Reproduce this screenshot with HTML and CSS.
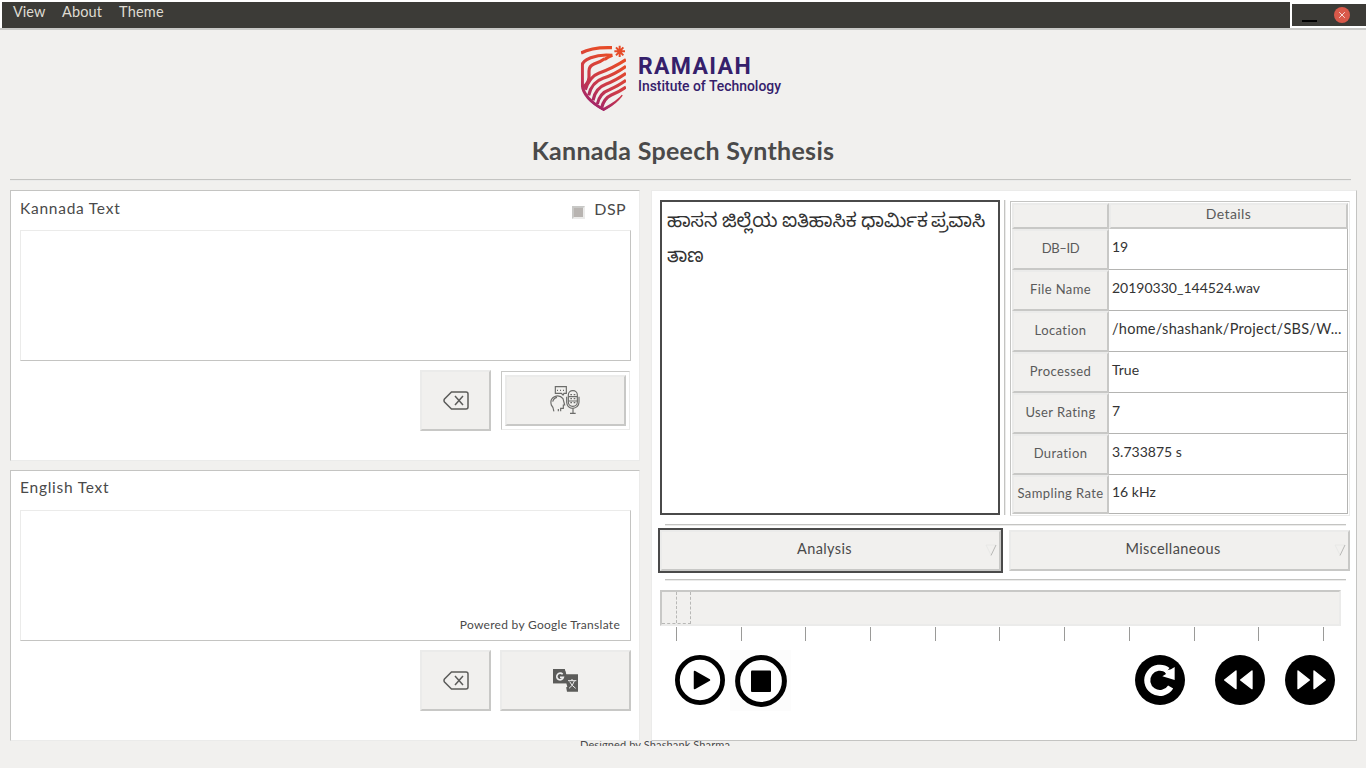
FILE: index.html
```html
<!DOCTYPE html>
<html lang="en">
<head>
<meta charset="utf-8">
<title>Kannada Speech Synthesis</title>
<link rel="stylesheet" href="styles.css">
</head>
<body>
<header class="topbar">
  <nav class="menu"><span class="m1">View</span><span class="m2">About</span><span class="m3">Theme</span></nav>
  <div class="winctl">
    <span class="minimize"></span>
    <svg class="close" viewBox="0 0 16 16"><circle cx="8" cy="8" r="8" fill="#d9594a"/><path d="M5.2 5.2l5.6 5.6M10.8 5.2l-5.6 5.6" stroke="#f4dcd8" stroke-width="1"/></svg>
  </div>
</header>
<section class="brand">
  <svg class="logo" viewBox="0 0 720 255">
    <defs><linearGradient id="g" gradientUnits="userSpaceOnUse" x1="70" y1="215" x2="160" y2="70"><stop offset="0" stop-color="#982070"/><stop offset=".5" stop-color="#cb3a4a"/><stop offset="1" stop-color="#e64b28"/></linearGradient>
    <clipPath id="c"><path d="M62 30H198V160Q190 196 131 229Q70 200 62 160Z"/></clipPath></defs>
    <g fill="none" stroke="url(#g)" stroke-width="9.500" clip-path="url(#c)">
      <path d="M63 54Q95 36 156 38"/>
      <path d="M157 61Q122 57 92 68Q67 78 67 90V150Q70 190 131 224Q178 198 189 182"/>
      <path d="M134 71Q122 80 102 87Q87 93 87 108V127Q86 144 69 157"/>
      <path d="M157 61Q144 66 134 73"/>
      <path d="M198 74Q160 99 116 115Q89 125 76 164"/>
      <path d="M198 94Q163 119 129 130Q95 142 86 181"/>
      <path d="M198 115Q166 137 139 147Q106 159 99 196"/>
      <path d="M198 136Q171 155 148 164Q119 174 112 207"/>
      <path d="M198 156Q176 171 154 180Q132 190 125 218"/>
    </g>
    <path d="M179 32V66M163 49H195M168 37L190 61M190 37L168 61" stroke="#e64b28" stroke-width="6"/>
    <text class="logo-name" x="234" y="116" textLength="338">RAMAIAH</text>
    <text class="logo-sub" x="234" y="167" textLength="429" lengthAdjust="spacingAndGlyphs">Institute of Technology</text>
  </svg>
  <h1>Kannada Speech Synthesis</h1>
</section>
<hr class="rule main-rule">
<main>
  <div class="left">
    <section class="panel">
      <div class="panel-head"><span class="label">Kannada Text</span><span class="dsp"><i></i><span>DSP</span></span></div>
      <div class="area"></div>
      <div class="actions">
        <div class="btn clear"><svg viewBox="0 0 26 19"><path d="M8.5 1H23Q25 1 25 3V16Q25 18 23 18H8.500L1.500 11Q.500 9.500 1.500 8Z"/><path d="M12 5l8 9M20 5l-8 9"/></svg></div>
        <div class="focus"><div class="btn mic">
          <svg viewBox="0 0 90 84"><path d="M16 2H49V22H42L39 27L34 22H16ZM21 13h3M30 13h3M39 13h3M11 76Q12 66 4 57Q-1 39 13 32Q29 25 39 38L44 57H40V67H32V76M25 69V76M8 47Q11 36 21 34"/><rect x="55" y="14" width="27" height="47" rx="13"/><path d="M50 32V49Q52 67 69 67Q86 65 87 49V32M69 67V82M60 82H77M61 26h5M71 26h5M61 38h5M71 38h5M61 50h5M71 50h5M55 32h27M55 45h27"/></svg>
        </div></div>
      </div>
    </section>
    <section class="panel">
      <div class="panel-head en"><span class="label">English Text</span></div>
      <div class="area"><span class="powered">Powered by Google Translate</span></div>
      <div class="actions second">
        <div class="btn clear"><svg viewBox="0 0 26 19"><path d="M8.5 1H23Q25 1 25 3V16Q25 18 23 18H8.500L1.500 11Q.500 9.500 1.500 8Z"/><path d="M12 5l8 9M20 5l-8 9"/></svg></div>
        <div class="btn trans">
          <svg viewBox="0 0 75 69"><path d="M0 0H35L40 16H75V68H42L38 54H0Z" fill="#5c5c5a"/><path d="M0 43H40L43 54H40V68H0Z" fill="#f1f0ee"/><path d="M0 0H35L46 43H0Z" fill="#5c5c5a"/><path d="M29 16A10 10 0 1 0 31 25H21" fill="none" stroke="#eee" stroke-width="5"/><path d="M45 35H70M57 30V35M64 36Q60 50 48 58M50 38Q56 50 68 58" fill="none" stroke="#eee" stroke-width="3"/></svg>
        </div>
      </div>
    </section>
  </div>
  <section class="right">
    <div class="info">
      <div class="transcript"><div class="kn k1">ಹಾಸನ ಜಿಲ್ಲೆಯ ಐತಿಹಾಸಿಕ ಧಾರ್ಮಿಕ<span class="thin"> </span>ಪ್ರವಾಸಿ</div><div class="kn">ತಾಣ</div></div>
      <div class="vline"></div>
      <div class="table">
        <div class="th"></div><div class="th"><span class="t-det">Details</span></div>
        <div class="th id">DB–ID</div><div class="td">19</div>
        <div class="th">File Name</div><div class="td">20190330_144524.wav</div>
        <div class="th">Location</div><div class="td loc">/home/shashank/Project/SBS/W...</div>
        <div class="th">Processed</div><div class="td">True</div>
        <div class="th">User Rating</div><div class="td">7</div>
        <div class="th">Duration</div><div class="td">3.733875 s</div>
        <div class="th">Sampling Rate</div><div class="td">16 kHz</div>
      </div>
    </div>
    <hr class="rule r1">
    <div class="tabs">
      <div class="tabfocus"><div class="btn tab"><span>Analysis</span><svg viewBox="0 0 12 12"><path d="M1 1H11" stroke="#e8e8e6"/><path d="M1 1L6 11" stroke="#e8e8e6"/><path d="M11 1L6 11.500" stroke="#b8b8b6"/></svg></div></div>
      <div class="btn tab misc"><span>Miscellaneous</span><svg viewBox="0 0 12 12"><path d="M1 1H11" stroke="#e8e8e6"/><path d="M1 1L6 11" stroke="#e8e8e6"/><path d="M11 1L6 11.500" stroke="#b8b8b6"/></svg></div>
    </div>
    <hr class="rule r2">
    <div class="slider"><div class="thumb"><i></i></div></div>
    <div class="ticks"><i></i><i></i><i></i><i></i><i></i><i></i><i></i><i></i><i></i><i></i><i></i></div>
    <div class="media">
      <svg class="play" viewBox="0 0 50 50"><circle cx="25" cy="25" r="22.600" fill="#fff" stroke="#000" stroke-width="4.800"/><path d="M19.500 16.500V33.500L34.500 25Z" stroke="#000" stroke-width="1.500" stroke-linejoin="round"/></svg>
      <div class="stop"><svg viewBox="0 0 52 52"><circle cx="26" cy="26" r="23.400" fill="#fff" stroke="#000" stroke-width="5"/><rect x="16" y="15.500" width="20" height="21.500" rx="1"/></svg></div>
      <svg class="reload" viewBox="0 0 150 150"><circle cx="75" cy="75" r="75"/><path d="M107 96A38 38 0 1 1 98 46" fill="none" stroke="#fff" stroke-width="18"/><path d="M119 36V75L82 64L93 57L88 48L108 43Z" fill="#fff"/></svg>
      <svg class="rew" viewBox="0 0 150 150"><circle cx="75" cy="75" r="75"/><path d="M63 48V101L29 75ZM111 48V101L77 75Z" fill="#fff" stroke="#fff" stroke-width="4" stroke-linejoin="round"/></svg>
      <svg class="fwd" viewBox="0 0 150 150"><circle cx="75" cy="75" r="75"/><path d="M39 48V101L73 75ZM87 48V101L121 75Z" fill="#fff" stroke="#fff" stroke-width="4" stroke-linejoin="round"/></svg>
    </div>
  </section>
</main>
<footer><span>Designed by Shashank Sharma</span></footer>
</body>
</html>
```
FILE: styles.css
```css
*{box-sizing:border-box}
body{margin:0;width:1366px;height:768px;overflow:hidden;background:#f1f0ee;color:#4a4a4a;font-family:Lato,"Noto Sans",sans-serif;font-size:14px;display:flex;flex-direction:column}
svg{display:block;flex:none}
.topbar{height:30px;flex:none;background:#fff;border-bottom:2px solid #c8c8c6;display:flex;padding:2px 0 0 2px}
.menu{width:1288px;height:26px;background:#3c3b37;color:#dfdbd2;display:flex;padding-left:11px;line-height:19px;font-size:14.5px}
.menu span{flex:none;white-space:nowrap}
.m1{width:49px;letter-spacing:0}.m2{width:57px;letter-spacing:.15px}.m3{letter-spacing:.2px}
.winctl{margin:2px 0 0 2px;width:74px;height:22px;background:#3c3b37;display:flex}
.minimize{width:15px;height:2px;background:#000;margin:16px 0 0 10px}
.close{width:16px;height:16px;margin:3px 0 0 17px}
.brand{height:149px;flex:none;display:flex;flex-direction:column;align-items:center;padding-top:5px;padding-right:2px}
.logo{width:240px;height:85px;margin-right:4px}
.logo-name{font:bold 69px Roboto,sans-serif;fill:#35206b}
.logo-sub{font:500 42px Roboto,sans-serif;fill:#35206b}
h1{margin:14px 0 0 2px;font-size:25px;line-height:32px;letter-spacing:.3px;white-space:nowrap}
.rule{border:0;margin:0;height:2px;flex:none;border-top:1px solid #c4c4c2;border-bottom:1px solid #ebebea}
.main-rule{margin:0 15px 0 10px}
main{display:flex;height:551px;flex:none;padding:0 9px 0 10px;margin-top:9px;gap:11px}
.left{width:630px;display:flex;flex-direction:column;gap:9px}
.panel{height:271px;background:#fff;border:1px solid;border-color:#c4c4c2 #ebebea #ebebea #c4c4c2;padding:0 8px 0 9px}
.panel-head{height:39px;display:flex;justify-content:space-between;line-height:34px;font-size:15.5px;white-space:nowrap}
.label{letter-spacing:.75px}
.en{line-height:32px}
.dsp{display:flex;gap:9px;font-size:16px;line-height:36px;padding-right:5px;letter-spacing:.4px}
.dsp i{width:13px;height:13px;margin-top:15px;background:#b8b4b1;border:2px solid;border-color:#c8c8c6 #ebebea #ebebea #c8c8c6}
.area{height:131px;border:1px solid;border-color:#ebebea #c4c4c2 #c4c4c2 #ebebea;display:flex;justify-content:flex-end;align-items:flex-end;padding:0 10px 6px}
.powered{font-size:12px;line-height:18px;letter-spacing:.28px;white-space:nowrap}
.actions{display:flex;padding:9px 0 0 400px;gap:10px;align-items:flex-start}
.second{gap:9px}
.btn{background:#f1f0ee;border:2px solid;border-color:#ebebea #c8c8c6 #c8c8c6 #ebebea;display:flex;align-items:center;justify-content:center}
.clear{width:71px;height:61px}
.clear svg{width:26px;height:19px;fill:none;stroke:#5c5c5a;stroke-width:1.5}
.focus{margin-top:1px;width:129px;height:59px;border:1px solid;border-color:#c8c8c6 #ebebea #ebebea #c8c8c6;padding:3px}
.mic{height:51px;width:121px}
.mic svg{width:30px;height:28px;fill:none;stroke:#6c6c6a;stroke-width:3.5;margin:-2px 2px 0 0}
.trans{width:131px;height:61px}
.trans svg{width:25px;height:23px}
.right{width:706px;background:#fff;border:1px solid;border-color:#ebebea #c4c4c2 #c4c4c2 #ebebea;padding:9px 6px 0 6px}
.info{display:flex;height:316px;padding-left:2px}
.transcript{width:340px;height:315px;border:2px solid #4a4a4a;padding:3px 5px}
.kn{font-family:"Noto Sans Kannada","Noto Sans","DejaVu Sans",sans-serif;font-size:19px;line-height:35px;white-space:nowrap;color:#333}
.k1{padding-top:2px;margin-bottom:-2px;font-size:18.9px;word-spacing:-1px}
.thin{font-size:8px;word-spacing:1px}
.vline{width:2px;height:315px;margin-left:4px;border-left:1px solid #c4c4c2;border-right:1px solid #ebebea}
.table{margin:1px 0 0 4px;width:340px;height:315px;border:1px solid;border-color:#c4c4c2 #ebebea #ebebea #c4c4c2;padding:1px;display:grid;grid-template-columns:97px 239px;grid-template-rows:26px 41px 41px 41px 41px 41px 41px 39px}
.th{background:#f1f0ee;border:2px solid;border-color:#ebebea #c8c8c6 #c8c8c6 #ebebea;display:flex;align-items:center;justify-content:center;font-size:13px;letter-spacing:.4px;white-space:nowrap;padding-bottom:4px;color:#5a5a5a}
.id{letter-spacing:-.4px}
.t-det{font-size:14px;margin-top:-1px}
.td{border-right:1px solid #b4b4b2;border-bottom:1px solid #b4b4b2;padding:0 0 5px 3px;display:flex;align-items:center;white-space:nowrap;font-size:14px;color:#333}
.loc{font-size:14.5px;letter-spacing:.27px}
.r1,.r2{margin:8px 4px 0 7px}
.tabs{display:flex;margin-top:2px;gap:6px;font-size:14.5px;letter-spacing:.4px}
.tabfocus{width:345px;height:45px;border:2px solid #4a4a4a}
.tab{position:relative;height:41px;padding:0 12px 5px 0}
.misc{width:341px;margin-top:2px;padding-right:13px}
.tab svg{position:absolute;width:12px;height:12px;right:2px;bottom:13px;fill:none}
.r2{margin-top:6px}
.slider{width:681px;height:36px;margin:9px 0 0 2px;background:#f1f0ee;border:2px solid;border-color:#c8c8c6 #ebebea #ebebea #c8c8c6}
.thumb{width:29px;height:32px;border:1px dashed #b8b8b6;border-width:0 1px 1px 0}
.thumb i{display:block;width:15px;height:31px;border-right:1px dashed #b8b8b6}
.ticks{height:14px;margin:1px 0 0 18px;width:648px;display:flex;justify-content:space-between}
.ticks i{width:1px;background:#9a9a98}
.media{display:flex;padding-left:17px;margin-top:9px}
.media>svg{width:50px;height:50px;margin-top:5px}
.stop{width:61px;height:61px;background:#fcfcfc;margin-left:5px;padding:5px}
.stop svg{width:52px;height:52px}
.media .reload{margin-left:344px}
.media .rew{margin-left:30px}
.media .fwd{margin-left:20px}
footer{height:5px;flex:none;overflow:hidden;padding-left:580px;font-size:11px;line-height:12px;letter-spacing:.12px;white-space:nowrap}
footer span{display:block;margin-top:-2px}
```
